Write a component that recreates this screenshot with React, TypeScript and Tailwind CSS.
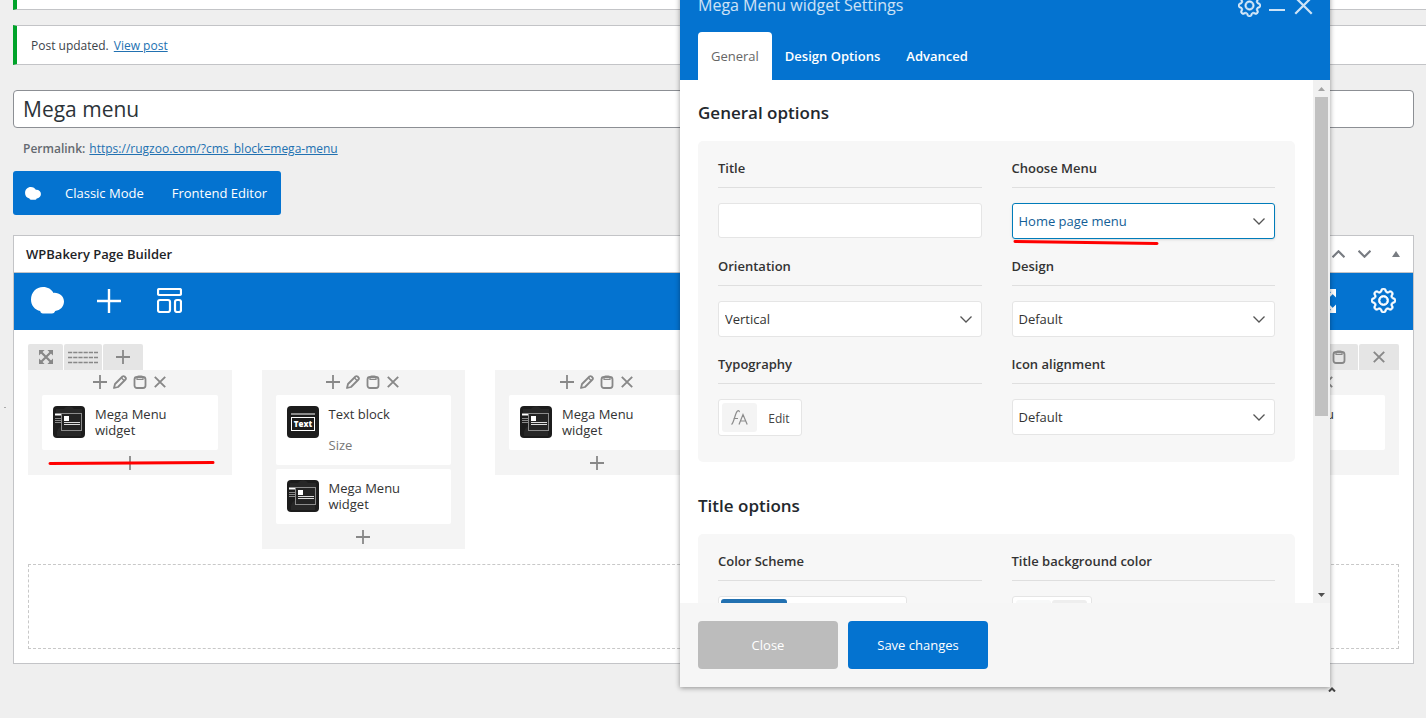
import { useId, useState } from "react";
import type { ReactNode } from "react";
import { BsGear } from "react-icons/bs";

type IconProps = { className?: string };

function CloudLogo({ className }: IconProps) {
  return (
    <svg className={className} viewBox="0 0 33 27" fill="currentColor">
      <path d="M12 0C17 0 20.500 2.300 22.400 5.900C28.300 5.400 33 9.500 33 14.600C33 19.500 29.200 23.600 24.200 24C23.500 25.700 22.500 26.500 21 26.500H12C10.200 26.500 9.400 25.500 9.200 24C3.800 22.800 0 18.500 0 12.500C0 5.300 5.200 0 12 0Z" />
    </svg>
  );
}

function PlusIcon({ className }: IconProps) {
  return (
    <svg className={className} viewBox="0 0 14 14" fill="none" stroke="currentColor" strokeWidth="1.800">
      <path d="M7 0v14M0 7h14" />
    </svg>
  );
}

function BigPlusIcon() {
  return (
    <svg className="h-6 w-6" viewBox="0 0 24 24" fill="none" stroke="currentColor" strokeWidth="2.400">
      <path d="M12 0v24M0 12h24" />
    </svg>
  );
}

function TemplateIcon() {
  return (
    <svg className="h-[25px] w-[25px]" viewBox="0 0 25 25" fill="none" stroke="currentColor" strokeWidth="2.200">
      <rect x="1" y="1" width="23" height="6" rx="1.500" />
      <rect x="1" y="12" width="12" height="12" rx="2" />
      <rect x="18" y="12" width="6" height="12" rx="2" />
    </svg>
  );
}

function FullscreenIcon() {
  return (
    <svg className="h-6 w-6" viewBox="0 0 24 24" fill="currentColor" stroke="currentColor" strokeWidth="2.500">
      <path d="M22 2l-6 6M2 2l6 6M22 22l-6-6M2 22l6-6" />
      <path d="M15.500 0H24v8.500zM8.500 0H0v8.500zM15.500 24H24v-8.500zM8.500 24H0v-8.500z" stroke="none" />
    </svg>
  );
}

function PencilIcon() {
  return (
    <svg className="h-[14px] w-[14px]" viewBox="0 0 14 14" fill="none" stroke="currentColor" strokeWidth="1.800" strokeLinejoin="round">
      <path d="M1 13l1-4 7.500-7.500a1.300 1.300 0 0 1 2 0l1 1a1.300 1.300 0 0 1 0 2L5 12z" />
      <path d="M8.500 3l2.800 2.800" strokeWidth="1.300" />
    </svg>
  );
}

function ClipboardIcon() {
  return (
    <svg className="h-[14px] w-[14px]" viewBox="0 0 14 14" fill="none" stroke="currentColor" strokeWidth="1.800">
      <rect x="1.500" y="2" width="11" height="11" rx="2.500" />
      <path d="M4 2.500C4 1.300 4.800 1 5.500 1h3c.7 0 1.500.3 1.500 1.500V4.300H4z" strokeWidth="1.200" />
    </svg>
  );
}

function CrossIcon({ className }: IconProps) {
  return (
    <svg className={className} viewBox="0 0 12 12" fill="none" stroke="currentColor" strokeWidth="1.900">
      <path d="M.8.8l10.400 10.400M11.200.8L.8 11.200" />
    </svg>
  );
}

function MoveIcon() {
  return (
    <svg className="h-[14px] w-[14px]" viewBox="0 0 14 14" fill="currentColor" stroke="currentColor">
      <path d="M2 2l10 10M12 2L2 12" strokeWidth="2.200" />
      <path d="M0 0h5.600L0 5.600zM14 0v5.600L8.400 0zM0 14V8.400L5.600 14zM14 14H8.400L14 8.400z" stroke="none" />
    </svg>
  );
}

function RowLayoutIcon() {
  return (
    <svg className="h-[13px] w-[30px]" viewBox="0 0 30 13" fill="none" stroke="currentColor" strokeWidth="1.600" strokeDasharray="4.200 1">
      <path d="M0 1.500h30M0 6.500h30M0 11.500h30" />
    </svg>
  );
}

function Chevron({ className }: IconProps) {
  return (
    <svg className={className} viewBox="0 0 12 7" fill="none" stroke="currentColor" strokeWidth="1.300">
      <path d="M.5.5L6 6 11.500.5" />
    </svg>
  );
}

function WidgetIcon() {
  return (
    <svg className="h-8 w-8 shrink-0" viewBox="0 0 32 32">
      <rect width="32" height="32" rx="4" fill="#1c1c1c" />
      <path d="M4 26a12 9 0 0 1 12-8a12 9 0 0 1 12 8v4H4zM3 3h8a6 6 0 0 1 10 0h8v5H3z" fill="#272727" />
      <path d="M2 8.500h6" stroke="#fff" strokeWidth="2" />
      <path d="M2 12.500h6M2 14.500h6M2 16.500h6" stroke="#8a8a8a" strokeWidth="1.200" />
      <rect x="8.500" y="7.500" width="20" height="17" fill="#232323" stroke="#8c8c8c" />
      <rect x="11" y="10" width="5" height="5" fill="#fff" />
      <path d="M11 16.500h16M11 18.500h16" stroke="#ddd" />
    </svg>
  );
}

function TextBlockIcon() {
  return (
    <svg className="h-8 w-8 shrink-0" viewBox="0 0 32 32">
      <rect width="32" height="32" rx="4" fill="#1c1c1c" />
      <path d="M4 8h24" stroke="#8c8c8c" strokeWidth="2" />
      <rect x="4.500" y="11.500" width="23" height="13" fill="#1c1c1c" stroke="#fff" />
      <text x="16" y="21" textAnchor="middle" fontSize="8" fontWeight="800" fill="#fff" fontFamily="Open Sans, sans-serif">
        Text
      </text>
    </svg>
  );
}

function IconButton({ label, className, children }: { label: string; className?: string; children: ReactNode }) {
  return (
    <button type="button" aria-label={label} className={`flex shrink-0 items-center justify-center ${className ?? ""}`}>
      {children}
    </button>
  );
}

function Element({ name, size }: { name: string; size?: string }) {
  return (
    <div className={`flex gap-[10px] rounded-xs bg-white pl-[11px] pt-[11px] ${size ? "h-[70px]" : "h-[55px]"}`}>
      {size ? <TextBlockIcon /> : <WidgetIcon />}
      <div className="w-24 text-[13px] leading-4">
        <p className="text-[#333]">{name}</p>
        {size && <p className="mt-[15px] text-[#777]">{size}</p>}
      </div>
    </div>
  );
}

function Column({ elements }: { elements: { name: string; size?: string }[] }) {
  return (
    <div className="bg-[#f4f4f4] px-[14px] text-[#888]">
      <div className="flex h-[25px] items-center justify-center pb-[2px]">
        <IconButton label="Add element" className="w-5"><PlusIcon className="h-[14px] w-[14px]" /></IconButton>
        <IconButton label="Edit column" className="w-5"><PencilIcon /></IconButton>
        <IconButton label="Paste" className="w-5"><ClipboardIcon /></IconButton>
        <IconButton label="Delete column" className="w-5"><CrossIcon className="h-3 w-3" /></IconButton>
      </div>
      <div className="flex flex-col gap-1">
        {elements.map((el, i) => (
          <Element key={i} {...el} />
        ))}
      </div>
      <IconButton label="Append element" className="h-[25px] w-full">
        <PlusIcon className="h-[14px] w-[14px]" />
      </IconButton>
    </div>
  );
}

const megaMenu = { name: "Mega Menu widget" };

const columns = [
  [megaMenu],
  [{ name: "Text block", size: "Size" }, megaMenu],
  [megaMenu],
  [megaMenu],
  [megaMenu],
  [megaMenu],
];

function PageBuilder() {
  return (
    <section className="mt-5 border border-[#c3c4c7] bg-white">
      <header className="flex h-[37px] items-center border-b border-[#c3c4c7] pl-3 pr-3">
        <h2 className="flex-1 pt-[2px] text-[13px] font-semibold text-[#1d2327]">WPBakery Page Builder</h2>
        <div className="flex items-center text-[#787c82]">
          <IconButton label="Move up" className="w-[26px]"><Chevron className="h-2 w-[13px] rotate-180 stroke-2" /></IconButton>
          <IconButton label="Move down" className="w-[26px]"><Chevron className="h-2 w-[13px] stroke-2" /></IconButton>
          <IconButton label="Toggle panel" className="ml-[14px] w-[10px]">
            <svg className="h-[6px] w-2" viewBox="0 0 8 6" fill="currentColor"><path d="M4 0l4 6H0z" /></svg>
          </IconButton>
        </div>
      </header>

      {/* Toolbar */}
      <div className="flex h-[57px] items-center bg-[#0473d0] pb-[2px] text-white">
        <IconButton label="WPBakery" className="w-[66px]"><CloudLogo className="h-[27px] w-[33px]" /></IconButton>
        <IconButton label="Add new element" className="w-[58px]"><BigPlusIcon /></IconButton>
        <IconButton label="Templates" className="w-[62px]"><TemplateIcon /></IconButton>
        <IconButton label="Fullscreen" className="ml-auto w-[58px]"><FullscreenIcon /></IconButton>
        <IconButton label="Settings" className="w-[60px]"><BsGear className="h-[25px] w-[25px]" strokeWidth="0.5" /></IconButton>
      </div>

      <div className="p-[14px]">
        <div className="flex h-[26px] gap-px text-[#888]">
          <IconButton label="Move row" className="w-[35px] rounded-t-xs bg-[#e5e5e5]"><MoveIcon /></IconButton>
          <IconButton label="Row layout" className="w-[38px] rounded-t-xs bg-[#e5e5e5]"><RowLayoutIcon /></IconButton>
          <IconButton label="Add column" className="w-10 rounded-t-xs bg-[#e5e5e5]"><PlusIcon className="h-[14px] w-[14px]" /></IconButton>
          <IconButton label="Paste in row" className="ml-auto w-[39px] rounded-t-xs bg-[#e5e5e5]"><ClipboardIcon /></IconButton>
          <IconButton label="Delete row" className="w-10 rounded-t-xs bg-[#e5e5e5]"><CrossIcon className="h-3 w-3" /></IconButton>
        </div>
        <div className="grid grid-cols-6 items-start gap-[30px]">
          {columns.map((elements, i) => (
            <Column key={i} elements={elements} />
          ))}
        </div>
        <div className="mt-[15px] h-[85px] border border-dashed border-[#c8c8c8]" />
      </div>
    </section>
  );
}

function Field({ label, htmlFor, children }: { label: string; htmlFor?: string; children: ReactNode }) {
  return (
    <div>
      <label htmlFor={htmlFor} className="mb-[15px] block h-[34px] border-b border-[#dfdfdf] text-[13px] font-semibold leading-[28px] text-[#333]">
        {label}
      </label>
      {children}
    </div>
  );
}

function SelectField({ label, options, active }: { label: string; options: string[]; active?: boolean }) {
  const id = useId();
  return (
    <Field label={label} htmlFor={id}>
      <div className="relative">
        <select
          id={id}
          className={`block h-9 w-full appearance-none rounded-[3px] border bg-white px-[6px] pt-[2px] text-[13px] outline-none ${
            active ? "border-[#007cba] text-[#135e96] shadow-sm" : "border-[#e5e5e5] text-[#333]"
          }`}
        >
          {options.map((o) => (
            <option key={o}>{o}</option>
          ))}
        </select>
        <Chevron className="pointer-events-none absolute right-[10px] top-[15px] h-[7px] w-3 text-[#555]" />
      </div>
    </Field>
  );
}

const tabs = ["General", "Design Options", "Advanced"];

function SettingsModal() {
  const [tab, setTab] = useState("General");
  return (
    <div
      role="dialog"
      aria-label="Mega Menu widget Settings"
      className="absolute -top-[19px] bottom-[31px] right-24 flex w-[650px] flex-col bg-white shadow-[0_1px_5px_rgba(0,0,0,0.4)]"
    >
      <header className="bg-[#0473d0] pl-[18px] pr-[15px] text-white">
        <div className="flex h-[51px] items-center pb-[3px] text-white/80">
          <h2 className="flex-1 text-base">Mega Menu widget Settings</h2>
          <div className="flex items-center">
            <IconButton label="Settings" className="w-7"><BsGear className="h-[23px] w-[23px]" strokeWidth="0.5" /></IconButton>
            <IconButton label="Minimize" className="w-7">
              <svg className="h-5 w-4" viewBox="0 0 16 20" stroke="currentColor" strokeWidth="2"><path d="M0 15h16" /></svg>
            </IconButton>
            <IconButton label="Close window" className="w-6"><CrossIcon className="h-[19px] w-[19px] stroke-[1.4]" /></IconButton>
          </div>
        </div>
        <div className="flex" role="tablist">
          {tabs.map((t) => (
            <button
              key={t}
              type="button"
              role="tab"
              aria-selected={t === tab}
              onClick={() => setTab(t)}
              className={`h-12 rounded-t px-[13px] pt-[2px] text-[13px] ${t === tab ? "bg-white text-[#666]" : "font-semibold"}`}
            >
              {t}
            </button>
          ))}
        </div>
      </header>

      <div className="flex min-h-0 flex-1">
        <div className="flex-1 overflow-hidden px-[18px] pt-[19px]">
          <h3 className="mb-[14px] text-[17px] font-semibold leading-7 text-[#23282d]">General options</h3>
          <div className="grid grid-cols-2 gap-x-[30px] gap-y-[13px] rounded-[5px] bg-[#f7f7f7] px-5 pb-[26px] pt-[13px]">
            <Field label="Title" htmlFor="title">
              <input id="title" type="text" className="block h-[35px] w-full rounded-[3px] border border-[#e5e5e5] bg-white px-2 text-[13px] outline-none" />
            </Field>
            <SelectField label="Choose Menu" options={["Home page menu"]} active />
            <SelectField label="Orientation" options={["Vertical", "Horizontal"]} />
            <SelectField label="Design" options={["Default"]} />
            <Field label="Typography" htmlFor="typography">
              <button
                id="typography"
                type="button"
                className="flex h-[37px] w-[84px] items-center rounded-[3px] border border-[#e5e5e5] bg-white pl-[3px] text-xs text-[#444]"
              >
                <span className="flex h-[29px] w-[35px] items-center justify-center rounded-[3px] bg-[#f4f4f4]">
                  <svg className="h-[15px] w-[17px]" viewBox="0 0 17 15" fill="none" stroke="#8c8c8c" strokeWidth="1.200">
                    <path d="M.5 14.500C3 13 4 3 6.500 1c1-.8 2 0 1.800 1.200M2.500 8.500h4.500M8 14.500L12 4.500l4.200 10M9.500 11h5.300" />
                  </svg>
                </span>
                <span className="flex-1 pt-[2px] text-center">Edit</span>
              </button>
            </Field>
            <SelectField label="Icon alignment" options={["Default"]} />
          </div>

          <h3 className="mb-[14px] mt-[30px] text-[17px] font-semibold leading-7 text-[#23282d]">Title options</h3>
          <div className="grid grid-cols-2 gap-x-[30px] rounded-[5px] bg-[#f7f7f7] px-5 pb-[26px] pt-[13px]">
            <Field label="Color Scheme">
              <div className="flex h-9 w-[189px] rounded-[3px] border border-[#e5e5e5] bg-white p-[2px]">
                <button type="button" aria-label="Inherit" className="w-[66px] rounded-[3px] bg-[#2271b1]" />
              </div>
            </Field>
            <Field label="Title background color">
              <div className="flex h-9 w-20 gap-px rounded-[3px] border border-[#e5e5e5] bg-white p-[3px]">
                <span className="w-[35px] rounded-[3px] bg-[#f7f8f8]" />
                <button type="button" aria-label="Select color" className="w-[35px] rounded-[3px] bg-[#eee]" />
              </div>
            </Field>
          </div>
        </div>

        {/* Scrollbar */}
        <div className="flex w-[17px] flex-col items-center bg-[#f1f1f1]">
          <span className="flex h-[17px] shrink-0 items-center">
            <svg className="h-1 w-[7px]" viewBox="0 0 7 4" fill="#a3a3a3"><path d="M3.500 0L7 4H0z" /></svg>
          </span>
          <span className="h-[61%] w-[13px] bg-[#c1c1c1]" />
          <span className="mt-auto flex h-[17px] shrink-0 items-center">
            <svg className="h-1 w-[7px]" viewBox="0 0 7 4" fill="#505050"><path d="M0 0h7L3.500 4z" /></svg>
          </span>
        </div>
      </div>

      <footer className="flex gap-[10px] bg-[#f6f6f6] p-[18px]">
        <button type="button" className="h-12 w-[140px] rounded bg-[#bcbcbc] pt-[2px] text-[13px] text-white">Close</button>
        <button type="button" className="h-12 w-[140px] rounded bg-[#0473d0] pt-[2px] text-[13px] text-white">Save changes</button>
      </footer>
    </div>
  );
}

export default function App() {
  return (
    <div className="relative h-screen overflow-hidden bg-[#efefef] pl-[13px] font-['Open_Sans',sans-serif] text-[13px] text-[#3c434a]">
      <div className="h-[10px] border-b border-l-4 border-b-[#c3c4c7] border-l-[#00a32a] bg-white" />
      <div className="mt-[15px] flex h-10 items-center gap-[5px] border-y border-l-4 border-y-[#c3c4c7] border-l-[#00a32a] bg-white px-[14px] pt-[2px] text-xs">
        <span>Post updated.</span>
        <a href="#" className="text-[#2271b1] underline">View post</a>
      </div>

      <div className="mr-3">
        <input
          type="text"
          aria-label="Post title"
          defaultValue="Mega menu"
          className="mt-[25px] block h-[38px] w-full rounded border border-[#8c8f94] bg-white px-[9px] text-[21px] text-[#2c3338] outline-none"
        />
        <p className="mt-[11px] flex gap-1 pl-[10px] text-xs leading-5">
          <strong className="font-semibold text-[#646970]">Permalink:</strong>
          <a href="#" className="text-[#2271b1] underline">https://rugzoo.com/?cms_block=mega-menu</a>
        </p>

        <div className="mt-3 inline-flex h-11 items-center rounded-[3px] bg-[#0473d0] pl-3 text-[13px] text-white">
          <CloudLogo className="h-[13px] w-4" />
          <button type="button" className="ml-[10px] h-full px-[14px] pt-[2px]">Classic Mode</button>
          <button type="button" className="h-full px-[14px] pt-[2px]">Frontend Editor</button>
        </div>

        <PageBuilder />
      </div>

      <SettingsModal />

      {/* Marker strokes and stray page marks */}
      <svg className="pointer-events-none absolute left-12 top-[460px] h-[6px] w-[167px]" viewBox="0 0 167 6" fill="none" stroke="#f00" strokeWidth="3" strokeLinecap="round">
        <path d="M2 3.500L165 2.500" />
      </svg>
      <svg className="pointer-events-none absolute right-[266px] top-[239px] h-[7px] w-[148px]" viewBox="0 0 148 7" fill="none" stroke="#f00" strokeWidth="3" strokeLinecap="round">
        <path d="M3 2.500L145 4.500" />
      </svg>
      <svg className="pointer-events-none absolute right-[90px] top-[687px] h-[5px] w-2" viewBox="0 0 8 5" fill="none" stroke="#444" strokeWidth="2">
        <path d="M1 4.500L4 1.500l3 3" />
      </svg>
      <span className="absolute left-1 top-[407px] h-px w-[2px] bg-[#aaa]" />
    </div>
  );
}
